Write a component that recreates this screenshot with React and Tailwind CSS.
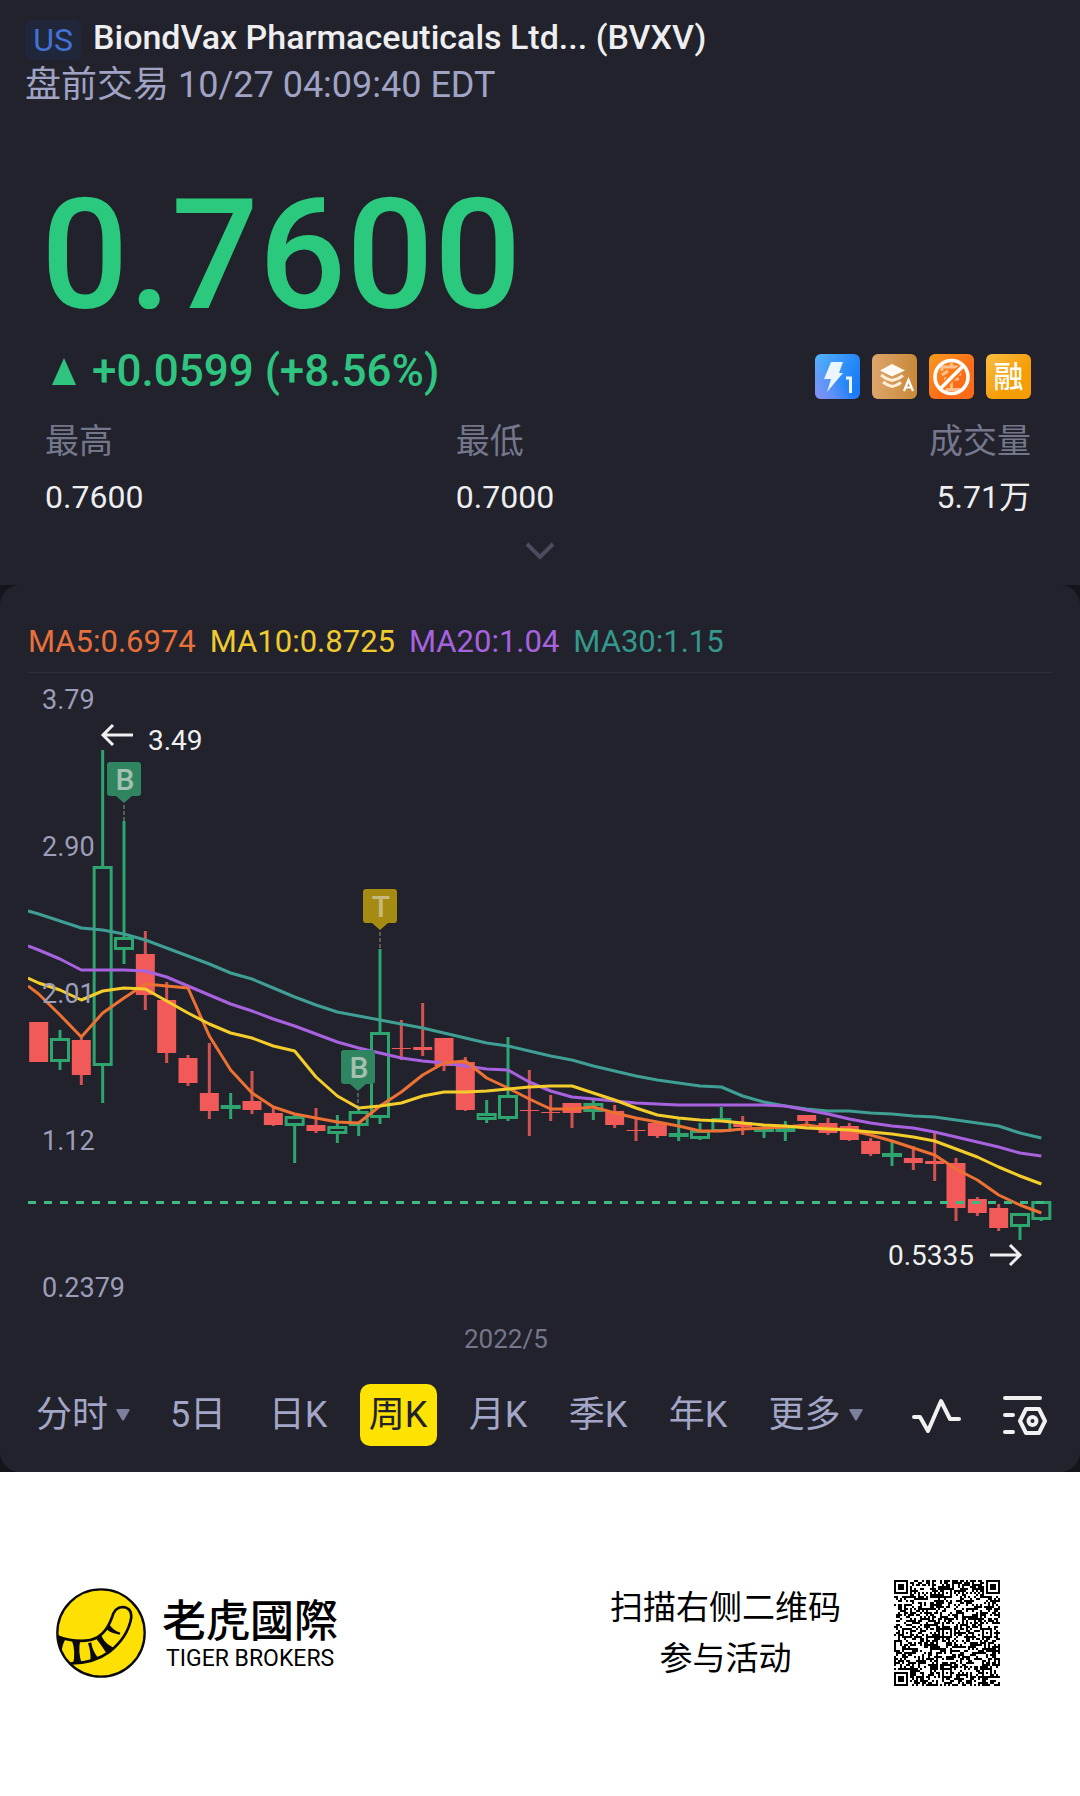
const UP = "#2ea56e";
const DOWN = "#f15a58";

// Each row: direction, high, body top, body bottom, low
const candles = [
  ["d", 1023, 1023, 1063, 1063], ["u", 1031, 1039, 1063, 1071], ["d", 1039, 1041, 1076, 1086],
  ["u", 751, 867, 1067, 1104], ["u", 822, 938, 951, 965], ["d", 932, 955, 996, 1011],
  ["d", 983, 1001, 1054, 1064], ["d", 1056, 1059, 1084, 1087], ["d", 1044, 1094, 1112, 1120],
  ["u", 1094, 1106, 1110, 1120], ["d", 1072, 1102, 1111, 1115], ["d", 1108, 1114, 1126, 1127],
  ["u", 1116, 1117, 1127, 1164], ["d", 1109, 1126, 1132, 1134], ["u", 1116, 1127, 1135, 1144],
  ["u", 1108, 1112, 1127, 1137], ["u", 950, 1033, 1119, 1125], ["d", 1021, 1049, 1050, 1061],
  ["d", 1004, 1048, 1051, 1057], ["d", 1039, 1039, 1067, 1072], ["d", 1058, 1063, 1111, 1112],
  ["u", 1101, 1114, 1121, 1124], ["u", 1038, 1096, 1120, 1122], ["d", 1071, 1111, 1112, 1137],
  ["d", 1096, 1113, 1114, 1122], ["d", 1104, 1104, 1114, 1129], ["u", 1101, 1104, 1113, 1121],
  ["d", 1106, 1112, 1126, 1129], ["d", 1120, 1131, 1132, 1142], ["d", 1123, 1124, 1137, 1139],
  ["u", 1120, 1134, 1137, 1142], ["u", 1124, 1131, 1140, 1141], ["u", 1108, 1119, 1133, 1133],
  ["d", 1117, 1123, 1128, 1136], ["u", 1126, 1129, 1132, 1139], ["u", 1122, 1129, 1132, 1142],
  ["d", 1116, 1116, 1122, 1127], ["d", 1119, 1124, 1134, 1136], ["d", 1124, 1127, 1141, 1142],
  ["d", 1139, 1142, 1155, 1157], ["u", 1142, 1154, 1158, 1167], ["d", 1147, 1159, 1164, 1171],
  ["d", 1134, 1162, 1165, 1182], ["d", 1159, 1164, 1209, 1222], ["d", 1198, 1200, 1214, 1217],
  ["d", 1205, 1209, 1229, 1232], ["u", 1214, 1214, 1228, 1241], ["u", 1202, 1202, 1221, 1222],
];

const averages = [
  {
    color: "#3f9f95",
    start: 912,
    ys: [915, 922, 929, 931, 935, 941, 949, 957, 965, 974, 980, 989, 998, 1006, 1013, 1017, 1021, 1025, 1029, 1034, 1039, 1044, 1047, 1052, 1057, 1061, 1067, 1072, 1077, 1081, 1084, 1087, 1088, 1097, 1103, 1107, 1110, 1112, 1112, 1114, 1115, 1117, 1118, 1121, 1124, 1127, 1134, 1139],
  },
  {
    color: "#a862df",
    start: 947,
    ys: [951, 960, 971, 971, 971, 972, 978, 987, 996, 1005, 1012, 1020, 1027, 1035, 1043, 1049, 1054, 1059, 1062, 1064, 1067, 1070, 1071, 1083, 1092, 1098, 1100, 1102, 1104, 1105, 1106, 1106, 1106, 1106, 1106, 1107, 1111, 1115, 1120, 1124, 1127, 1129, 1133, 1138, 1143, 1148, 1154, 1157],
  },
  {
    color: "#ee7134",
    start: 987,
    ys: [995, 1016, 1038, 1014, 999, 985, 987, 989, 1037, 1071, 1094, 1108, 1115, 1119, 1123, 1124, 1107, 1093, 1076, 1064, 1062, 1079, 1089, 1100, 1110, 1110, 1108, 1114, 1119, 1123, 1127, 1132, 1132, 1130, 1129, 1128, 1126, 1129, 1131, 1136, 1142, 1149, 1156, 1170, 1181, 1196, 1206, 1214],
  },
  {
    color: "#f5cd2b",
    start: 979,
    ys: [984, 991, 1001, 992, 989, 990, 1002, 1014, 1025, 1034, 1039, 1047, 1052, 1078, 1097, 1109, 1107, 1104, 1097, 1093, 1093, 1092, 1090, 1088, 1087, 1087, 1094, 1101, 1109, 1116, 1119, 1121, 1122, 1124, 1126, 1127, 1129, 1130, 1131, 1133, 1135, 1138, 1142, 1150, 1158, 1168, 1177, 1185],
  },
];

const candleX = (i) => 38.67 + (i * 64) / 3;

function Candle({ i, row }) {
  const [dir, high, top, bottom, low] = row;
  const x = candleX(i);
  if (dir === "d") {
    return (
      <g fill={DOWN}>
        <rect x={x - 1.5} y={high} width="3" height={low - high} opacity="0.85" />
        <rect x={x - 9.5} y={top} width="19" height={bottom - top} />
      </g>
    );
  }
  const thin = bottom - top < 5;
  return (
    <g stroke={UP} strokeWidth="3">
      <path d={`M${x} ${high}V${top}M${x} ${bottom}V${low}`} />
      <rect
        x={x - 8.5}
        y={top + 1.5}
        width="17"
        height={Math.max(bottom - top - 3, 1)}
        fill={thin ? UP : "none"}
      />
    </g>
  );
}

function Marker({ x, y, letter, fill, ink, to }) {
  return (
    <g>
      <path
        d={`M${x - 14} ${y}h28a3 3 0 0 1 3 3v28a3 3 0 0 1 -3 3h-6l-8 7l-8 -7h-6a3 3 0 0 1 -3 -3v-28a3 3 0 0 1 3 -3z`}
        fill={fill}
      />
      <path d={`M${x} ${y + 43}V${to}`} stroke={ink} strokeWidth="1.5" strokeDasharray="4 2" opacity="0.5" />
      <text x={x + 1} y={y + 28} textAnchor="middle" fontSize="30" fontWeight="500" fill={ink}>
        {letter}
      </text>
    </g>
  );
}

function Chart() {
  return (
    <svg
      viewBox="28 673 1024 697"
      className="block w-full"
      fill="none"
      role="img"
      aria-label="周K"
      fontFamily='Roboto, "Noto Sans CJK SC", sans-serif'
    >
      <rect x="28" y="673" width="1024" height="1" fill="#2d2e3a" />
      {candles.map((row, i) => (
        <Candle key={i} i={i} row={row} />
      ))}
      {averages.map((a) => (
        <polyline
          key={a.color}
          points={[`28,${a.start}`, ...a.ys.map((y, i) => `${candleX(i)},${y}`)].join(" ")}
          stroke={a.color}
          strokeWidth="3"
          strokeLinejoin="round"
        />
      ))}
      <path d="M28 1203.5H1052" stroke="#3fb983" strokeWidth="3" strokeDasharray="8 8" />
      <Marker x={124} y={763} letter="B" fill="#2f8560" ink="#a4c0b2" to={822} />
      <Marker x={358} y={1051} letter="B" fill="#2f8560" ink="#a4c0b2" to={1110} />
      <Marker x={380} y={890} letter="T" fill="#a68b12" ink="#c6b980" to={950} />
      <g fill="#9b9db9" fontSize="27">
        <text x="42" y="710">3.79</text>
        <text x="42" y="857">2.90</text>
        <text x="42" y="1004">2.01</text>
        <text x="42" y="1151">1.12</text>
        <text x="42" y="1298">0.2379</text>
      </g>
      <text x="464" y="1349" fontSize="26" fill="#74768c">2022/5</text>
      <g fill="#f0f0f0" fontSize="28">
        <text x="148" y="751">3.49</text>
        <text x="888" y="1266">0.5335</text>
      </g>
      <g stroke="#f0f0f0" strokeWidth="3">
        <path d="M133 736H104M113 726L103 736L113 746" />
        <path d="M990 1256H1019M1010 1246L1020 1256L1010 1266" />
      </g>
    </svg>
  );
}

function BadgeIcons() {
  return (
    <div className="mt-2 flex gap-3">
      <svg className="size-[45px]" viewBox="0 0 45 45" role="img" aria-label="Level 1">
        <defs>
          <linearGradient id="lv" x1="0" y1="0" x2="1" y2="0.5">
            <stop offset="0" stopColor="#57b3fb" />
            <stop offset="1" stopColor="#1a7cf8" />
          </linearGradient>
          <linearGradient id="lv2" x1="0" y1="1" x2="0.5" y2="0.5">
            <stop offset="0" stopColor="#8a90f5" />
            <stop offset="1" stopColor="#8a90f5" stopOpacity="0" />
          </linearGradient>
        </defs>
        <rect width="45" height="45" rx="6" fill="url(#lv)" />
        <rect width="45" height="45" rx="6" fill="url(#lv2)" />
        <path d="M16 8h12l-4 11h4L12 38l4-13H9z" fill="#eaf5ff" />
        <path d="M31 24h4.500v15" fill="none" stroke="#eaf5ff" strokeWidth="3" />
      </svg>
      <svg className="size-[45px]" viewBox="0 0 45 45" role="img" aria-label="A">
        <defs>
          <linearGradient id="st" x1="0" y1="0" x2="1" y2="0">
            <stop offset="0" stopColor="#dda66c" />
            <stop offset="1" stopColor="#c88838" />
          </linearGradient>
        </defs>
        <rect width="45" height="45" rx="6" fill="url(#st)" />
        <path d="M20 10l13 6.500l-13 6l-12-6z" fill="#fffaf2" />
        <g fill="none" stroke="#fdecd6" strokeWidth="3">
          <path d="M9 21q5.500 4.500 11 5.500q6-1 11-5" />
          <path d="M11 28q4.500 3.500 9 4.500q5-1 9-4" />
        </g>
        <path d="M32 37l4.500-11l4.500 11M33.500 33.500h6" fill="none" stroke="#fff" strokeWidth="2.200" />
      </svg>
      <svg className="size-[45px]" viewBox="0 0 45 45" role="img" aria-label="禁空">
        <defs>
          <linearGradient id="ns" x1="0" y1="0" x2="1" y2="1">
            <stop offset="0" stopColor="#f99a1e" />
            <stop offset="0.600" stopColor="#fb6c18" />
          </linearGradient>
        </defs>
        <rect width="45" height="45" rx="6" fill="url(#ns)" />
        <g fill="none" stroke="#ffc08f" strokeWidth="2.800">
          <path d="M13 17v-4h19v4M22.500 9v4M19 17l-6 4M26 17l6 4M15 25h15M22.500 25v10M13 35.500h19" />
        </g>
        <path d="M34 12L12 35" stroke="#fb7a1c" strokeWidth="7" />
        <circle cx="22.500" cy="23" r="16.500" fill="none" stroke="#fff" strokeWidth="3.600" />
        <path d="M34 12L11 35" stroke="#fff" strokeWidth="3.400" />
      </svg>
      <span className="flex size-[45px] items-center justify-center rounded-md bg-gradient-to-br from-[#f9be3c] to-[#f59d04] to-60% text-[30px] leading-none font-medium text-[#fffdf5]">
        融
      </span>
    </div>
  );
}

function TabCaret() {
  return (
    <svg className="h-3 w-[14px]" viewBox="0 0 14 12" aria-hidden="true">
      <path d="M1 0h12q1 .5.5 1.500L8 11q-1 1-2 0L.5 1.500Q0 .5 1 0z" fill="#7c7f9b" />
    </svg>
  );
}

function Tab({ children, active, caret }) {
  return (
    <button
      type="button"
      aria-pressed={!!active}
      className={
        active
          ? "h-[62px] w-[77px] justify-self-center rounded-[10px] bg-[#fee202] whitespace-nowrap text-[#22222a]"
          : "flex h-[62px] items-center justify-center gap-2 whitespace-nowrap"
      }
    >
      {children}
      {caret && <TabCaret />}
    </button>
  );
}

function TigerLogo() {
  return (
    <svg className="size-[90px]" viewBox="17 17 270 270" aria-hidden="true">
      <defs>
        <clipPath id="disc">
          <circle cx="152" cy="152" r="131" />
        </clipPath>
      </defs>
      <circle cx="152" cy="152" r="131" fill="#fee102" />
      <g clipPath="url(#disc)" stroke="#0a0a0a" fill="none">
        <path
          d="M18 160C45 174 90 179 120 173C152 166 172 140 184 108C190 84 200 74 217 74C236 75 246 88 242 110C234 150 208 184 178 208C146 232 105 244 58 243"
          strokeWidth="8"
          strokeLinecap="round"
        />
        <g fill="#0a0a0a" stroke="none">
          <path d="M16 156L46 170C38 182 35 196 34 210L44 232L28 222L14 190z" />
          <path d="M64 172H90C85 196 86 220 94 242L68 245C74 220 73 196 64 172z" />
          <path d="M113 183L123 180C125 200 134 214 144 228L120 238C122 218 119 200 113 183z" />
          <path d="M136 168L153 158C158 174 172 188 190 196L170 216C160 200 150 184 136 168z" />
          <path d="M168 140L177 126C184 138 194 146 210 151L208 157C192 154 178 150 168 140z" />
        </g>
      </g>
      <circle cx="152" cy="152" r="131" fill="none" stroke="#0a0a0a" strokeWidth="7" />
    </svg>
  );
}

const QR_SIZE = 53;
const QR_ALIGN = [6, 26, 46];

function qrModule(r, c) {
  const far = QR_SIZE - 7;
  for (const [fr, fc] of [[0, 0], [0, far], [far, 0]]) {
    const y = r - fr;
    const x = c - fc;
    if (y >= -1 && y <= 7 && x >= -1 && x <= 7) {
      const ring = Math.max(Math.abs(y - 3), Math.abs(x - 3));
      return ring === 3 || ring <= 1;
    }
  }
  for (const ar of QR_ALIGN) {
    for (const ac of QR_ALIGN) {
      const ring = Math.max(Math.abs(r - ar), Math.abs(c - ac));
      if (ring <= 2) return ring !== 1;
    }
  }
  if (r === 6) return c % 2 === 0;
  if (c === 6) return r % 2 === 0;
  let h = Math.imul(r * 73 + c + 11, 2654435761);
  h = Math.imul(h ^ (h >>> 15), 2246822519);
  h ^= h >>> 13;
  return (h & 1) === 1;
}

function QrCode() {
  let d = "";
  for (let r = 0; r < QR_SIZE; r++) {
    for (let c = 0; c < QR_SIZE; c++) {
      if (qrModule(r, c)) d += `M${c} ${r}h1v1h-1z`;
    }
  }
  return (
    <svg className="size-[106px]" viewBox={`0 0 ${QR_SIZE} ${QR_SIZE}`} role="img" aria-label="二维码" shapeRendering="crispEdges">
      <path d={d} fill="#000" />
    </svg>
  );
}

export default function App() {
  return (
    <div className="min-h-screen w-full bg-white font-[Roboto,'Noto_Sans_CJK_SC',sans-serif] text-[#eeeef0]">
      <div className="bg-[#14141b]">
        <section className="bg-[#21222b] px-[25px] pt-5 pb-6">
          <header>
            <div className="flex items-start gap-3">
              <span className="flex h-10 w-14 items-center justify-center rounded-md bg-[#20273a] text-[32px] leading-none text-[#4272d4]">
                US
              </span>
              <h1 className="text-[34px] leading-[34px] font-medium whitespace-nowrap">
                BiondVax Pharmaceuticals Ltd... (BVXV)
              </h1>
            </div>
            <p className="text-[36px] leading-[50px] text-[#a0a3c4]">盘前交易 10/27 04:09:40 EDT</p>
          </header>

          <div className="mt-14 px-4 text-[154px] leading-[180px] font-medium text-[#2ac97e]">0.7600</div>

          <div className="flex items-start justify-between pr-6 pl-[27px]">
            <div className="flex items-center gap-4 text-[44px] leading-[50px] font-medium text-[#2fc480]">
              <svg className="h-[27px] w-6" viewBox="0 0 24 27" aria-hidden="true">
                <path d="M12 0L24 27H0z" fill="#2fc480" />
              </svg>
              <span>+0.0599 (+8.56%)</span>
            </div>
            <BadgeIcons />
          </div>

          <dl className="mt-3.5 grid grid-cols-[5fr_5fr_2fr] pr-6 pl-5 leading-[56px] whitespace-nowrap">
            <div>
              <dt className="text-[34px] text-[#74768c]">最高</dt>
              <dd className="text-[32px]">0.7600</dd>
            </div>
            <div>
              <dt className="text-[34px] text-[#74768c]">最低</dt>
              <dd className="text-[32px]">0.7000</dd>
            </div>
            <div className="text-right">
              <dt className="text-[34px] text-[#74768c]">成交量</dt>
              <dd className="text-[32px]">5.71万</dd>
            </div>
          </dl>

          <button type="button" aria-label="展开" className="mx-auto mt-4 block">
            <svg className="h-5 w-8" viewBox="0 0 32 20" fill="none">
              <path d="M3 3L16 16L29 3" stroke="#4b4c5e" strokeWidth="4" />
            </svg>
          </button>
        </section>

        <section className="rounded-[20px] bg-[#21222b] pt-8">
          <div className="flex gap-3.5 px-7 pb-[5px] text-[31px] leading-[50px]">
            <span className="text-[#e8703a]">MA5:0.6974</span>
            <span className="text-[#f0cb30]">MA10:0.8725</span>
            <span className="text-[#a862df]">MA20:1.04</span>
            <span className="text-[#35988d]">MA30:1.15</span>
          </div>
          <div className="px-7">
            <Chart />
          </div>
          <nav className="grid grid-cols-[130fr_repeat(6,100fr)_135fr_105fr_74fr] items-center pt-[15px] pr-[18px] pb-[26px] pl-[18px] text-[36px] leading-none text-[#a3a6c6]">
            <Tab caret>分时</Tab>
            <Tab>5日</Tab>
            <Tab>日K</Tab>
            <Tab active>周K</Tab>
            <Tab>月K</Tab>
            <Tab>季K</Tab>
            <Tab>年K</Tab>
            <Tab caret>更多</Tab>
            <button type="button" aria-label="指标" className="justify-self-center">
              <svg className="h-9 w-[50px]" viewBox="0 0 50 36" fill="none" stroke="#f0f0f0" strokeWidth="4" strokeLinecap="round" strokeLinejoin="round">
                <path d="M3 20h6l8 14L30 4l9 18h9" />
              </svg>
            </button>
            <button type="button" aria-label="设置" className="justify-self-center">
              <svg className="h-10 w-[46px]" viewBox="0 0 46 40" fill="none" stroke="#f0f0f0" strokeWidth="4" strokeLinecap="round" strokeLinejoin="round">
                <path d="M3 3h35M3 20h8M3 37h8M24 14h13l6 12l-6 12h-13l-6-12z" />
                <circle cx="30.500" cy="26" r="4" />
              </svg>
            </button>
          </nav>
        </section>
      </div>

      <footer className="flex items-center justify-between py-[108px] pr-20 pl-14 text-black">
        <div className="flex items-center gap-4">
          <TigerLogo />
          <div>
            <div className="font-['Noto_Sans_CJK_TC',sans-serif] text-[44px] leading-[48px] font-medium">老虎國際</div>
            <div className="mt-[3px] px-1 text-[23px] leading-7">TIGER BROKERS</div>
          </div>
        </div>
        <div className="flex items-center gap-[53px]">
          <p className="text-center text-[33px] leading-[51px]">
            扫描右侧二维码
            <br />
            参与活动
          </p>
          <QrCode />
        </div>
      </footer>
    </div>
  );
}
